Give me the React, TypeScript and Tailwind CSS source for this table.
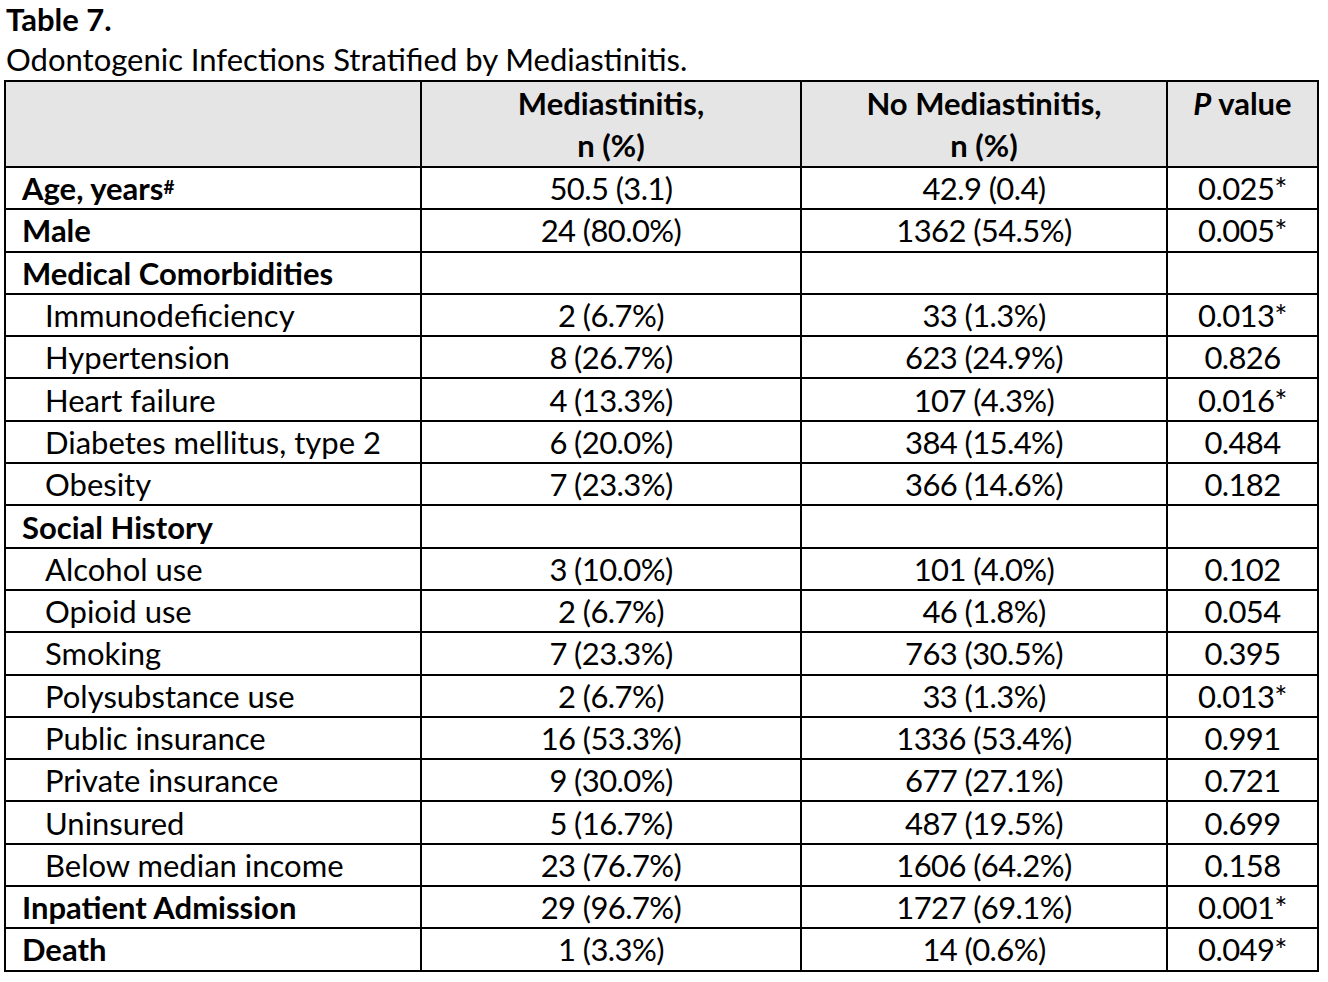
const rows: { label: string; kind: 'head' | 'sub' | 'section'; a: string; b: string; p: string; sup?: string }[] = [
  { label: 'Age, years', kind: 'head', sup: '#', a: '50.5 (3.1)', b: '42.9 (0.4)', p: '0.025*' },
  { label: 'Male', kind: 'head', a: '24 (80.0%)', b: '1362 (54.5%)', p: '0.005*' },
  { label: 'Medical Comorbidities', kind: 'section', a: '', b: '', p: '' },
  { label: 'Immunodeficiency', kind: 'sub', a: '2 (6.7%)', b: '33 (1.3%)', p: '0.013*' },
  { label: 'Hypertension', kind: 'sub', a: '8 (26.7%)', b: '623 (24.9%)', p: '0.826' },
  { label: 'Heart failure', kind: 'sub', a: '4 (13.3%)', b: '107 (4.3%)', p: '0.016*' },
  { label: 'Diabetes mellitus, type 2', kind: 'sub', a: '6 (20.0%)', b: '384 (15.4%)', p: '0.484' },
  { label: 'Obesity', kind: 'sub', a: '7 (23.3%)', b: '366 (14.6%)', p: '0.182' },
  { label: 'Social History', kind: 'section', a: '', b: '', p: '' },
  { label: 'Alcohol use', kind: 'sub', a: '3 (10.0%)', b: '101 (4.0%)', p: '0.102' },
  { label: 'Opioid use', kind: 'sub', a: '2 (6.7%)', b: '46 (1.8%)', p: '0.054' },
  { label: 'Smoking', kind: 'sub', a: '7 (23.3%)', b: '763 (30.5%)', p: '0.395' },
  { label: 'Polysubstance use', kind: 'sub', a: '2 (6.7%)', b: '33 (1.3%)', p: '0.013*' },
  { label: 'Public insurance', kind: 'sub', a: '16 (53.3%)', b: '1336 (53.4%)', p: '0.991' },
  { label: 'Private insurance', kind: 'sub', a: '9 (30.0%)', b: '677 (27.1%)', p: '0.721' },
  { label: 'Uninsured', kind: 'sub', a: '5 (16.7%)', b: '487 (19.5%)', p: '0.699' },
  { label: 'Below median income', kind: 'sub', a: '23 (76.7%)', b: '1606 (64.2%)', p: '0.158' },
  { label: 'Inpatient Admission', kind: 'head', a: '29 (96.7%)', b: '1727 (69.1%)', p: '0.001*' },
  { label: 'Death', kind: 'head', a: '1 (3.3%)', b: '14 (0.6%)', p: '0.049*' },
];

export default function App() {
  return (
    <div className="w-[1328px] h-[982px] bg-white text-black font-['Lato',sans-serif] text-[31px]">
      <div className="pl-[6px]">
        <p className="font-bold leading-[38px]">Table 7.</p>
        <p className="leading-[42px]">Odontogenic Infections Stratified by Mediastinitis.</p>
      </div>
      <table className="ml-[4px] w-[1313px] border-collapse border-2 border-black table-fixed">
        <colgroup>
          <col className="w-[416px]" />
          <col className="w-[380px]" />
          <col className="w-[366px]" />
          <col className="w-[151px]" />
        </colgroup>
        <thead>
          <tr className="bg-[#e5e5e5] h-[85px] font-bold leading-[42px]">
            <th className="border-2 border-black p-0"></th>
            <th className="border-2 border-black align-top p-0">
              Mediastinitis,
              <br />
              n (%)
            </th>
            <th className="border-2 border-black align-top p-0">
              No Mediastinitis,
              <br />
              n (%)
            </th>
            <th className="border-2 border-black align-top p-0">
              <i>P</i> value
            </th>
          </tr>
        </thead>
        <tbody>
          {rows.map((r, i) => (
            <tr key={i} className="h-[42.3px] leading-[38px]">
              <td
                className={
                  r.kind === 'sub'
                    ? 'border-2 border-black pl-[39px] py-0'
                    : 'border-2 border-black pl-[16px] py-0 font-bold'
                }
              >
                {r.label}
                {r.sup && <sup className="text-[19px] relative -top-[6px]">{r.sup}</sup>}
              </td>
              <td className="border-2 border-black text-center py-0 tracking-[-0.6px]">{r.a}</td>
              <td className="border-2 border-black text-center py-0 tracking-[-0.6px]">{r.b}</td>
              <td className="border-2 border-black text-center py-0 tracking-[-0.6px]">{r.p}</td>
            </tr>
          ))}
        </tbody>
      </table>
    </div>
  );
}
